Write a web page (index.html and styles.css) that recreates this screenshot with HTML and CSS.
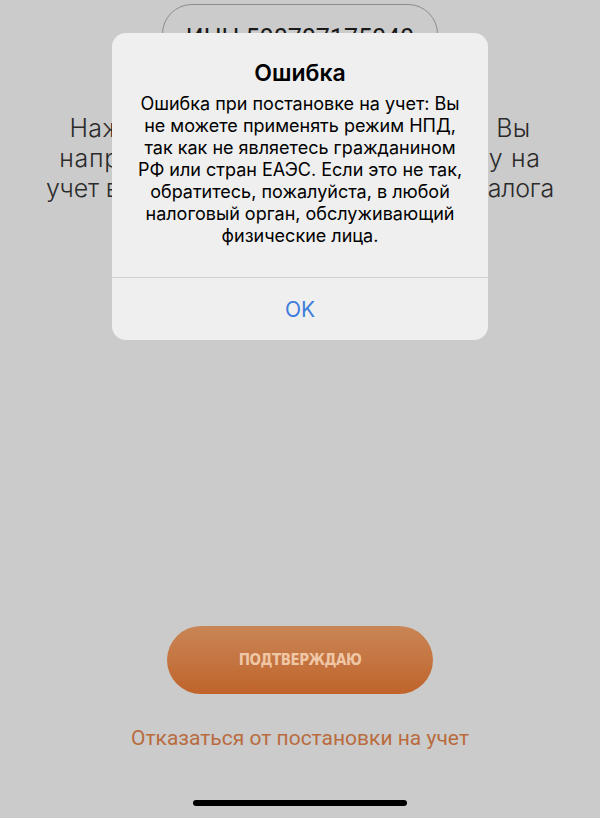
FILE: index.html
```html
<!DOCTYPE html>
<html lang="ru">
<head>
<meta charset="utf-8">
<link rel="stylesheet" href="styles.css">
</head>
<body>
<div class="screen">
  <div class="inn">ИНН 500707175040</div>
  <p class="intro">
    <span class="line l1">Нажимая кнопку «Подтверждаю», Вы</span>
    <span class="line l2">направляете заявку на постановку на</span>
    <span class="line l3">учет в качестве плательщика этого налога</span>
  </p>
  <button class="confirm">ПОДТВЕРЖДАЮ</button>
  <a class="decline">Отказаться от постановки на учет</a>
  <div class="home-bar"></div>

  <div class="alert">
    <div class="alert-body">
      <div class="alert-title">Ошибка</div>
      <div class="alert-message">
        <span class="line">Ошибка при постановке на учет: Вы</span>
        <span class="line">не можете применять режим НПД,</span>
        <span class="line">так как не являетесь гражданином</span>
        <span class="line">РФ или стран ЕАЭС. Если это не так,</span>
        <span class="line">обратитесь, пожалуйста, в любой</span>
        <span class="line">налоговый орган, обслуживающий</span>
        <span class="line">физические лица.</span>
      </div>
    </div>
    <div class="alert-action">OK</div>
  </div>
</div>
</body>
</html>
```

FILE: styles.css
```css
html, body {
  margin: 0;
  padding: 0;
}
body {
  background: #cbcbcb;
  font-family: Inter, Roboto, "Noto Sans", sans-serif;
}
.screen {
  position: relative;
  width: 600px;
  height: 818px;
  display: flex;
  flex-direction: column;
  align-items: center;
  overflow: hidden;
}
.line {
  display: block;
  white-space: nowrap;
}
.inn {
  margin-top: 4px;
  width: 276px;
  height: 68px;
  box-sizing: border-box;
  border: 1.5px solid #8c8c8c;
  border-radius: 30px;
  display: flex;
  align-items: center;
  justify-content: center;
  font-family: Roboto, sans-serif;
  font-size: 25px;
  color: #1a1a1a;
  font-weight: 400;
}
.intro {
  margin: 41px 0 0;
  text-align: center;
  font-size: 25px;
  line-height: 30px;
  font-weight: 300;
  color: #2b2b2b;
}
.l1 {
  letter-spacing: 0.2px;
  word-spacing: -1px;
}
.l2 {
  letter-spacing: 0.7px;
}
.l3 {
  letter-spacing: -0.2px;
}
.confirm {
  margin-top: 423px;
  width: 266px;
  height: 68px;
  border: none;
  border-radius: 34px;
  background: linear-gradient(#c98656, #c0632b);
  color: #efc7a7;
  font-family: "DejaVu Sans", sans-serif;
  font-stretch: condensed;
  font-weight: bold;
  font-size: 15px;
  letter-spacing: -0.5px;
  padding: 0;
}
.decline {
  margin-top: 31px;
  font-family: Roboto, sans-serif;
  font-size: 21px;
  line-height: 26px;
  color: #b96b3e;
}
.home-bar {
  margin-top: 49px;
  width: 214px;
  height: 6px;
  border-radius: 3px;
  background: #000;
}
.alert {
  position: absolute;
  left: 112px;
  top: 33px;
  width: 376px;
  border-radius: 14px;
  background: #efefef;
  overflow: hidden;
}
.alert-body {
  padding: 27px 14px 30px;
  text-align: center;
  color: #000;
  border-bottom: 1px solid #d2d2d2;
}
.alert-title {
  font-size: 23px;
  line-height: 26px;
  font-weight: 600;
}
.alert-message {
  margin-top: 7px;
  font-size: 18px;
  line-height: 22px;
}
.alert-action {
  height: 62px;
  display: flex;
  align-items: center;
  justify-content: center;
  font-size: 21px;
  color: #3d7ddc;
}
```
